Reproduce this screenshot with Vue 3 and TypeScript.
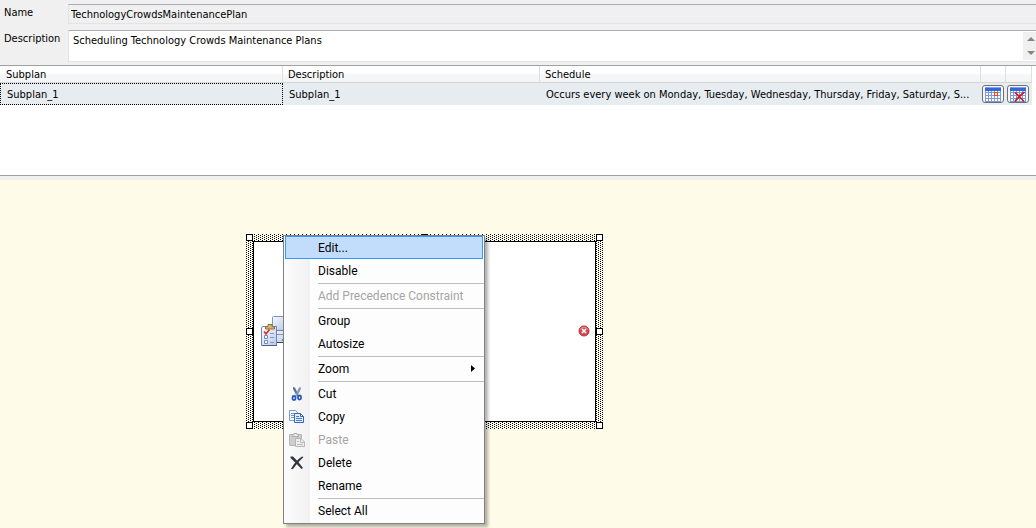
<script setup lang="ts">
import { ref } from 'vue'

interface MenuItem {
  label: string
  icon?: string
  disabled?: boolean
  active?: boolean
  submenu?: boolean
}

const planName = ref('TechnologyCrowdsMaintenancePlan')
const planDescription = ref('Scheduling Technology Crowds Maintenance Plans')

const subplans = [
  {
    name: 'Subplan_1',
    description: 'Subplan_1',
    schedule: 'Occurs every week on Monday, Tuesday, Wednesday, Thursday, Friday, Saturday, S...',
  },
]

const handles = ['nw', 'n', 'ne', 'w', 'e', 'sw', 's', 'se']

const menuGroups: MenuItem[][] = [
  [{ label: 'Edit...', active: true }, { label: 'Disable' }],
  [{ label: 'Add Precedence Constraint', disabled: true }],
  [{ label: 'Group' }, { label: 'Autosize' }],
  [{ label: 'Zoom', submenu: true }],
  [
    { label: 'Cut', icon: 'cut' },
    { label: 'Copy', icon: 'copy' },
    { label: 'Paste', icon: 'paste', disabled: true },
    { label: 'Delete', icon: 'delete' },
    { label: 'Rename' },
  ],
  [{ label: 'Select All' }],
]
</script>

<template>
  <main class="designer">
    <form class="properties" @submit.prevent>
      <label for="plan-name">Name</label>
      <input id="plan-name" v-model="planName" class="name-box" type="text" readonly />
      <label for="plan-description">Description</label>
      <div class="description-box">
        <textarea id="plan-description" v-model="planDescription"></textarea>
        <div class="scroller">
          <button type="button" aria-label="Scroll up">
            <svg width="8" height="4" viewBox="0 0 8 4"><path d="M0 4L4 0L8 4Z" fill="#868686" /></svg>
          </button>
          <button type="button" aria-label="Scroll down">
            <svg width="8" height="4" viewBox="0 0 8 4"><path d="M0 0L4 4L8 0Z" fill="#868686" /></svg>
          </button>
        </div>
      </div>
    </form>

    <section class="subplans">
      <table>
        <colgroup>
          <col class="col-name" />
          <col class="col-description" />
          <col />
          <col class="col-edit" />
          <col class="col-remove" />
        </colgroup>
        <thead>
          <tr>
            <th scope="col">Subplan</th>
            <th scope="col">Description</th>
            <th scope="col">Schedule</th>
            <th></th>
            <th></th>
          </tr>
        </thead>
        <tbody>
          <tr v-for="plan in subplans" :key="plan.name">
            <td class="focused">{{ plan.name }}</td>
            <td>{{ plan.description }}</td>
            <td class="schedule">{{ plan.schedule }}</td>
            <td class="action">
              <button type="button" aria-label="Edit schedule">
                <svg width="16" height="15" viewBox="0 0 16 15">
                  <rect width="16" height="15" fill="#fff" />
                  <path d="M.5 4V15M3.5 4V15M6.5 4V15M9.5 4V15M12.5 4V15M15.5 4V15M0 5.5H16M0 8.5H16M0 11.5H16M0 14.5H16" stroke="#7d9cd2" />
                  <rect width="16" height="4" fill="#3468da" />
                  <rect width="16" height="1" fill="#7ba2ee" />
                  <rect x="9.500" y="5.500" width="3" height="3" fill="#fff" stroke="#ee4a1c" />
                </svg>
              </button>
            </td>
            <td class="action">
              <button type="button" aria-label="Remove schedule">
                <svg width="16" height="15" viewBox="0 0 16 15">
                  <rect width="16" height="15" fill="#fff" />
                  <path d="M.5 4V15M3.5 4V15M6.5 4V15M9.5 4V15M12.5 4V15M15.5 4V15M0 5.5H16M0 8.5H16M0 11.5H16M0 14.5H16" stroke="#7d9cd2" />
                  <rect width="16" height="4" fill="#3468da" />
                  <rect width="16" height="1" fill="#7ba2ee" />
                  <path d="M5 5.500Q9 9 14 14.500M14.500 5Q9 9 5 14.500" fill="none" stroke="#c91c24" stroke-width="1.700" />
                </svg>
              </button>
            </td>
          </tr>
        </tbody>
      </table>
    </section>

    <section class="canvas">
      <div class="task">
        <svg class="hatch" width="100%" height="100%" shape-rendering="crispEdges" aria-hidden="true">
          <defs>
            <pattern id="hatch-dots" width="4" height="2" patternUnits="userSpaceOnUse">
              <path d="M0 0h1v1h-1zM2 1h1v1h-1z" />
            </pattern>
          </defs>
          <rect width="100%" height="100%" fill="url(#hatch-dots)" />
        </svg>
        <div class="task-body">
          <svg class="task-icon" width="32" height="32" viewBox="0 0 32 32">
            <defs>
              <linearGradient id="server-fill" x2="1" y2="1">
                <stop offset="0" stop-color="#f5f9ff" />
                <stop offset="1" stop-color="#aec0e6" />
              </linearGradient>
              <linearGradient id="board-fill" x2="1" y2="1">
                <stop offset="0" stop-color="#ffffff" />
                <stop offset="1" stop-color="#b9c9ea" />
              </linearGradient>
            </defs>
            <rect x="12.500" y="1.500" width="18" height="14" rx="1" fill="url(#server-fill)" stroke="#8094bd" />
            <rect x="14.500" y="15.500" width="16" height="12" fill="url(#server-fill)" stroke="#72809e" />
            <path d="M15 19.500H31" stroke="#8795b5" />
            <path d="M15 27.500H31" stroke="#3c4658" />
            <rect x="22" y="24" width="2" height="2" fill="#20c020" />
            <path d="M1.500 12.500L3 11.500H16.500V30.500H1.500Z" fill="url(#board-fill)" stroke="#6d84b8" />
            <path d="M2 30.500H17" stroke="#4c5f8a" />
            <path d="M5.500 14V12L8 11.500V9.500H12V11.500L14.500 12V14Z" fill="#d5b867" stroke="#8e7336" />
            <path d="M4 16.500L6 19L9.500 14.500" fill="none" stroke="#e02323" stroke-width="1.500" />
            <path d="M4.500 20.500H7.500V23.500H4.500ZM4.500 25.500H7.500V28.500H4.500Z" fill="#fff" stroke="#7189ba" />
            <path d="M10 18.500H14M10 22.500H14M10 27.500H14" stroke="#8296c0" />
          </svg>
          <svg class="error-icon" width="12" height="12" viewBox="0 0 12 12" role="img" aria-label="Error">
            <circle cx="6" cy="6" r="5" fill="#d64a50" stroke="#ad3038" />
            <path d="M2 4.500Q6 0 10 4.500" fill="none" stroke="#eb9296" />
            <path d="M4 4L8 8M8 4L4 8" stroke="#fff" stroke-width="1.600" />
          </svg>
        </div>
        <span v-for="handle in handles" :key="handle" class="handle" :class="handle"></span>
      </div>

      <div class="menu" role="menu">
        <div v-for="(group, index) in menuGroups" :key="index" class="menu-group" role="group">
          <button
            v-for="item in group"
            :key="item.label"
            type="button"
            role="menuitem"
            :class="{ active: item.active }"
            :disabled="item.disabled"
          >
            <span class="menu-icon">
              <svg v-if="item.icon === 'cut'" width="16" height="16" viewBox="0 0 16 16">
                <path d="M4 1L6 1.500L10 10L8 10.500L4 3Z" fill="#5f7292" />
                <path d="M11.500 1L10 1.500L6 10L8 10.500L12 3Z" fill="#8798b4" />
                <rect x="3.500" y="10" width="3" height="4" rx="1.500" fill="#fff" stroke="#2858b8" stroke-width="1.800" />
                <rect x="9" y="9.500" width="3" height="4" rx="1.500" fill="#fff" stroke="#2858b8" stroke-width="1.800" />
              </svg>
              <svg v-else-if="item.icon === 'copy'" width="16" height="16" viewBox="0 0 16 16">
                <path d="M.5 1.500H6.500L9.500 4.500V11.500H.5Z" fill="#f2f7ff" stroke="#7a9bd4" />
                <path d="M2 4.500H6M2 6.500H6M2 8.500H6" stroke="#7799d2" />
                <path d="M5.500 4.500H11.500L14.500 7.500V13.500H5.500Z" fill="#e2edff" stroke="#3c63b4" />
                <path d="M11.500 4.500V7.500H14.500Z" fill="#fff" stroke="#3c63b4" />
                <path d="M7 7.500H10M7 9.500H13M7 11.500H13" stroke="#477bd4" />
              </svg>
              <svg v-else-if="item.icon === 'paste'" width="16" height="16" viewBox="0 0 16 16">
                <path d="M.5 2.500H12.500V13.500H.5Z" fill="#cdcdcd" stroke="#b7b7b7" />
                <path d="M3.500 4.500V2.500H5V1.500H8V2.500H9.500V4.500Z" fill="#ededed" stroke="#aaa" />
                <path d="M6.500 6.500H12L15.500 10V14.500H6.500Z" fill="#ededed" stroke="#b5b5b5" />
                <path d="M11.500 6.500V10.500H15.500M8 9.500H10M8 12.500H14" fill="none" stroke="#bcbcbc" />
              </svg>
              <svg v-else-if="item.icon === 'delete'" width="16" height="16" viewBox="0 0 16 16">
                <path d="M1.500 1.500L4 1.500Q9 6 14 13L12.500 14Q7 8 1.500 3ZM13 1.500L14.500 2Q8 8 4 14L2 14Q6 6 13 1.500Z" fill="#34363d" />
              </svg>
            </span>
            <span>{{ item.label }}</span>
            <svg v-if="item.submenu" class="arrow" width="4" height="7" viewBox="0 0 4 7"><path d="M0 0L4 3.500L0 7Z" /></svg>
          </button>
        </div>
      </div>
    </section>
  </main>
</template>

<style>
body {
  margin: 0;
}
</style>

<style scoped>
.designer {
  display: flex;
  flex-direction: column;
  min-height: 100vh;
  background: #f0f0f0;
  color: #000;
  font: 11px/16px "DejaVu Sans Condensed", sans-serif;
}

button,
input,
textarea {
  margin: 0;
  padding: 0;
  border: 0;
  border-radius: 0;
  outline: 0;
  box-sizing: border-box;
  color: inherit;
  font: inherit;
}

svg {
  display: block;
}

.properties {
  display: grid;
  grid-template-columns: 64px 1fr;
  row-gap: 6px;
  padding: 4px 0 3px 4px;
}

label {
  padding-top: 1px;
}

.name-box {
  width: 100%;
  height: 20px;
  padding-left: 2px;
  background: #f0f0f0;
  border: 1px solid #e2e3ea;
  border-top-color: #abadb3;
  border-right: 0;
}

.description-box {
  display: flex;
  height: 32px;
  box-sizing: border-box;
  background: #fff;
  border: 1px solid #e2e3ea;
  border-top-color: #abadb3;
  border-right: 0;
}

textarea {
  flex: 1;
  padding: 2px 4px;
  resize: none;
  overflow: hidden;
  background: #fff;
}

.scroller {
  display: flex;
  flex-direction: column;
  width: 13px;
  margin: 1px 0;
}

.scroller button {
  display: flex;
  flex: 1;
  align-items: center;
  justify-content: center;
  padding-left: 2px;
  background: #f0f0f0;
}

.subplans {
  height: 111px;
  box-sizing: border-box;
  padding-right: 4px;
  background: #fff;
  border-top: 1px solid #a0a0a0;
  border-bottom: 1px solid #a0a0a0;
}

table {
  width: 100%;
  table-layout: fixed;
  border-collapse: separate;
  border-spacing: 0;
}

.col-name {
  width: 283px;
}

.col-description {
  width: 257px;
}

.col-edit {
  width: 25px;
}

.col-remove {
  width: 26px;
}

th {
  height: 17px;
  box-sizing: border-box;
  padding: 1px 5px 0;
  background: linear-gradient(#fff 45%, #f5f6f8 55%, #f3f4f6);
  border-right: 1px solid #dedfe1;
  border-bottom: 1px solid #d5d5d5;
  font-weight: normal;
  line-height: 15px;
  text-align: left;
}

th:first-child {
  padding-left: 6px;
}

td {
  height: 22px;
  box-sizing: border-box;
  padding: 1px 5px 0;
  background: #e7ecf1;
  border: 1px solid #e7ecf1;
  white-space: nowrap;
}

.focused {
  padding-left: 6px;
  border: 1px dotted #000;
}

.schedule {
  overflow: hidden;
  text-overflow: ellipsis;
}

.action {
  padding: 0;
}

.action button {
  display: flex;
  align-items: center;
  justify-content: center;
  width: 22px;
  height: 18px;
  background: #f7f8fa;
  border: 1px solid #707070;
  border-radius: 3px;
}

.canvas {
  position: relative;
  flex: 1;
  min-height: 348px;
  border-top: 4px solid #f0f0f0;
  box-sizing: border-box;
  background: #fffbe9;
}

.task {
  position: absolute;
  left: 246px;
  top: 54px;
  width: 357px;
  height: 195px;
  box-sizing: border-box;
  padding: 7px;
}

.hatch {
  position: absolute;
  left: 0;
  top: 0;
}

.task-body {
  position: relative;
  display: flex;
  align-items: center;
  justify-content: space-between;
  height: 100%;
  box-sizing: border-box;
  padding: 0 5px 2px 6px;
  background: #fff;
  border: 1px solid #000;
}

.handle {
  position: absolute;
  width: 7px;
  height: 7px;
  box-sizing: border-box;
  background: #fff;
  border: 1px solid #000;
}

.nw,
.n,
.ne {
  top: 0;
}

.w,
.e {
  top: 94px;
}

.sw,
.s,
.se {
  bottom: 0;
}

.nw,
.w,
.sw {
  left: 0;
}

.n,
.s {
  left: 175px;
}

.ne,
.e,
.se {
  right: 0;
}

.menu {
  position: absolute;
  left: 283px;
  top: 55px;
  width: 202px;
  box-sizing: border-box;
  padding-bottom: 1px;
  background: linear-gradient(90deg, #fcfcfc, #f1f1f1 26px, #fdfdfd 26px);
  border: 1px solid #808080;
  box-shadow: 3px 3px 3px rgba(0, 0, 0, 0.3);
  font: 12px/16px Roboto, sans-serif;
}

.menu-group + .menu-group {
  padding-top: 2px;
  background: linear-gradient(#bdbdbd, #bdbdbd) 34px 1px / 100% 1px no-repeat;
}

.menu button {
  display: flex;
  align-items: center;
  width: 100%;
  height: 23px;
  padding: 0 8px 0 4px;
  background: transparent;
  border: 1px solid transparent;
  text-align: left;
}

.menu button:disabled {
  color: #a5a5a5;
}

.menu button.active {
  width: calc(100% - 2px);
  margin-left: 1px;
  padding-left: 3px;
  background: #c2dcfb;
  border-color: #3399ff;
}

.menu-icon {
  width: 29px;
}

.arrow {
  margin-left: auto;
}
</style>
